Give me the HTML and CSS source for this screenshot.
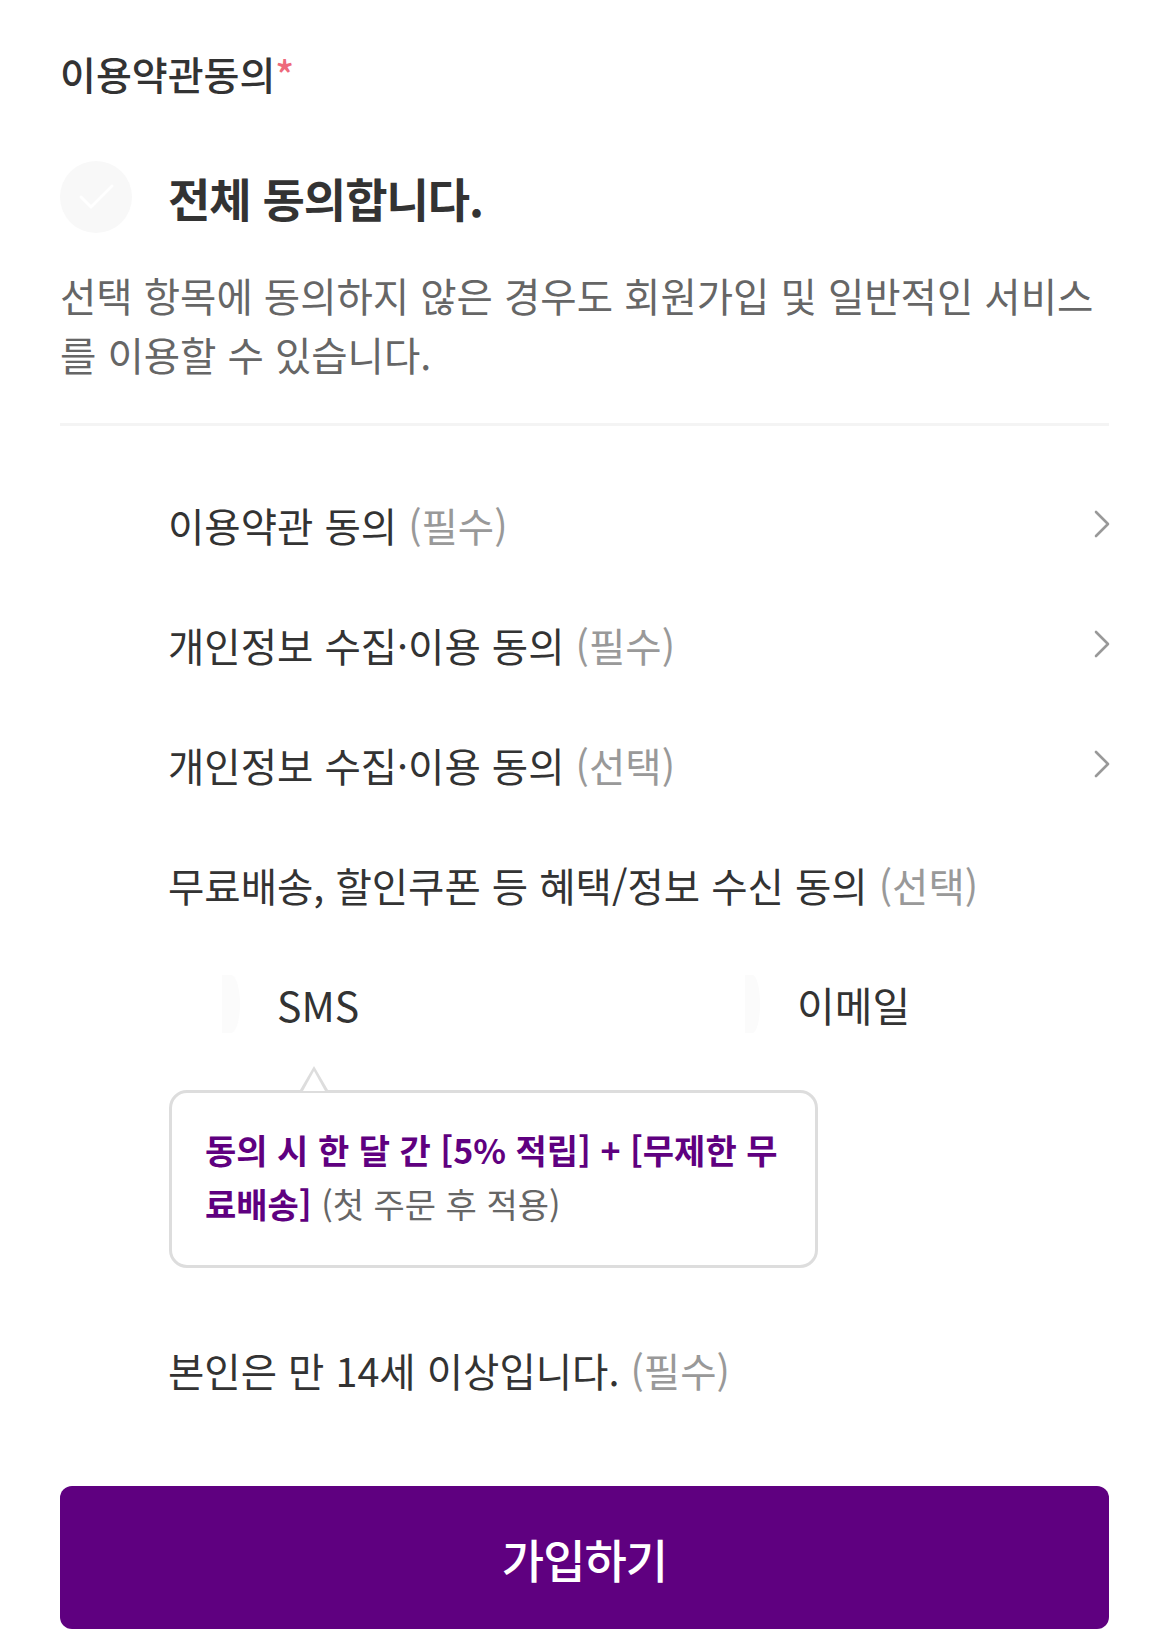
FILE: index.html
```html
<!DOCTYPE html>
<html lang="ko">
<head>
<meta charset="utf-8">
<title>이용약관동의</title>
<link rel="stylesheet" href="styles.css">
</head>
<body>
<div class="page">
  <h2 class="label">이용약관동의<span class="req">*</span></h2>

  <div class="all-row">
    <span class="circle">
      <svg width="72" height="72" viewBox="0 0 72 72"><polyline points="21,36 31,46 52,25" fill="none" stroke="#ffffff" stroke-width="3" stroke-linecap="round" stroke-linejoin="round"/></svg>
    </span>
    <span class="all-text">전체 동의합니다.</span>
  </div>

  <p class="desc">선택 항목에 동의하지 않은 경우도 회원가입 및 일반적인 서비스를 이용할 수 있습니다.</p>

  <div class="sep"></div>

  <ul class="terms">
    <li class="term">
      <span class="term-text">이용약관 동의 <em>(필수)</em></span>
      <svg class="chev" width="18" height="30" viewBox="0 0 18 30"><polyline points="3,3 15,15 3,27" fill="none" stroke="#999" stroke-width="2.6" stroke-linecap="round" stroke-linejoin="round"/></svg>
    </li>
    <li class="term">
      <span class="term-text">개인정보 수집·이용 동의 <em>(필수)</em></span>
      <svg class="chev" width="18" height="30" viewBox="0 0 18 30"><polyline points="3,3 15,15 3,27" fill="none" stroke="#999" stroke-width="2.6" stroke-linecap="round" stroke-linejoin="round"/></svg>
    </li>
    <li class="term">
      <span class="term-text">개인정보 수집·이용 동의 <em>(선택)</em></span>
      <svg class="chev" width="18" height="30" viewBox="0 0 18 30"><polyline points="3,3 15,15 3,27" fill="none" stroke="#999" stroke-width="2.6" stroke-linecap="round" stroke-linejoin="round"/></svg>
    </li>
    <li class="term">
      <span class="term-text">무료배송, 할인쿠폰 등 혜택/정보 수신 동의 <em>(선택)</em></span>
    </li>
  </ul>

  <div class="channels">
    <div class="channel ch-sms"><span class="ghost"></span><span class="ch-text">SMS</span></div>
    <div class="channel ch-mail"><span class="ghost"></span><span class="ch-text">이메일</span></div>
  </div>

  <div class="tip">
    <p class="tip-text"><strong>동의 시 한 달 간 [5% 적립] + [무제한 무료배송]</strong> (첫 주문 후 적용)</p>
  </div>

  <div class="term age">
    <span class="term-text">본인은 만 14세 이상입니다. <em>(필수)</em></span>
  </div>

  <button class="submit" type="button">가입하기</button>
</div>
</body>
</html>
```

FILE: styles.css
```css
* { box-sizing: border-box; }
html, body { margin: 0; padding: 0; background: #fff; }
body {
  font-family: "Noto Sans CJK KR", "Noto Sans", sans-serif;
  color: #333;
}
.page {
  width: 1170px;
  padding: 46px 61px 0 60px;
}
.label {
  margin: 0;
  font-size: 39px;
  line-height: 54px;
  font-weight: 500;
  color: #333;
}
.req { color: #ee6a7b; }

.all-row {
  display: flex;
  align-items: center;
  height: 72px;
  margin-top: 61px;
}
.circle {
  width: 72px;
  height: 72px;
  border-radius: 50%;
  background: #f8f8f8;
  display: flex;
  flex-shrink: 0;
}
.all-text {
  margin-left: 36px;
  font-size: 46px;
  font-weight: 700;
  color: #333;
  letter-spacing: -1px;
}

.desc {
  margin: 32px 0 0;
  font-size: 39.5px;
  line-height: 59px;
  color: #666;
}

.sep {
  margin-top: 40px;
  height: 3px;
  background: #f4f4f4;
}

.terms {
  list-style: none;
  margin: 38px 0 0;
  padding: 0;
}
.term {
  display: flex;
  align-items: center;
  justify-content: space-between;
  height: 120px;
  padding-left: 108px;
}
.term-text {
  font-size: 39.5px;
  color: #333;
}
.term-text em {
  font-style: normal;
  color: #999;
}
.chev { display: block; margin-right: -2px; }

.channels {
  display: flex;
  height: 80px;
  margin-top: 20px;
  padding-left: 162px;
}
.channel {
  display: flex;
  align-items: center;
  flex-shrink: 0;
}
.ch-sms { width: 523px; }
.ghost {
  width: 18px;
  height: 58px;
  border-radius: 0 50% 50% 0 / 0 50% 50% 0;
  background: #fbfbfb;
}
.ch-text {
  font-size: 41px;
  color: #333;
  margin-left: 37px;
}
.ch-mail .ghost { width: 15px; }

.tip {
  position: relative;
  margin: 46px 0 0 109px;
  width: 649px;
  border: 3px solid #ddd;
  border-radius: 18px;
  padding: 30px 23px 34px 33px;
}
.tip::before,
.tip::after {
  content: "";
  position: absolute;
  left: 128px;
  width: 0;
  height: 0;
  border-left: 14px solid transparent;
  border-right: 14px solid transparent;
}
.tip::before {
  top: -27px;
  border-bottom: 24px solid #ddd;
}
.tip::after {
  top: -22px;
  left: 131px;
  border-left-width: 11px;
  border-right-width: 11px;
  border-bottom: 20px solid #fff;
}
.tip-text {
  margin: 0;
  font-size: 34px;
  line-height: 54px;
  color: #666;
}
.tip-text strong {
  font-weight: 700;
  color: #5f0080;
}

.age {
  margin-top: 41px;
}

.submit {
  display: block;
  width: 100%;
  height: 143px;
  margin-top: 57px;
  border: 0;
  border-radius: 12px;
  background: #5f0080;
  color: #fff;
  font-family: "Noto Sans CJK KR", "Noto Sans", sans-serif;
  font-size: 46px;
  font-weight: 500;
  letter-spacing: -1px;
}
```
